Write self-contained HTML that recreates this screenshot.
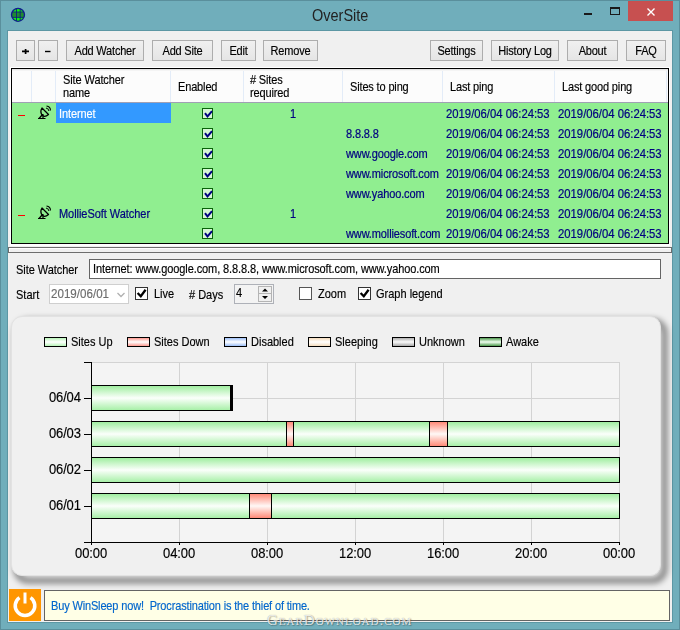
<!DOCTYPE html>
<html><head><meta charset="utf-8">
<style>
*{box-sizing:border-box;margin:0;padding:0}
html,body{width:680px;height:630px;overflow:hidden}
body{position:relative;background:#70aebb;font-family:"Liberation Sans",sans-serif;font-size:11px;color:#000}
.a{position:absolute}
.t{position:absolute;white-space:pre;line-height:13px;transform:scaleY(1.1);transform-origin:0 10.3px;-webkit-text-stroke-width:0.15px}
.nt{transform:none}
#frame{left:0;top:0;width:680px;height:630px;border:1px solid #5a8f9c}
#client{left:7px;top:30px;width:666px;height:593px;border:1px solid #5c97a4;background:#f0f0f0}
.btn{position:absolute;top:40px;height:21px;border:1px solid #adadad;background:linear-gradient(#f0f0f0,#e5e5e5);text-align:center;line-height:19px;font-size:11px;color:#000;letter-spacing:-0.2px;padding-top:1px}
.btn span{display:inline-block;transform:scaleY(1.1);transform-origin:50% 13.3px;-webkit-text-stroke-width:0.15px}
.hdr{position:absolute;top:69px;height:33px;background:#fcfcfc}
.sep{position:absolute;top:71px;width:1px;height:31px;background:#e3ecf8}
.row{position:absolute;left:12px;width:655px;height:20px}
.cb{position:absolute;left:202px;width:11px;height:11px;border:1px solid #0a640a;background:#d6f5d6}
.cb svg{position:absolute;left:1px;top:1px}
.nv{color:#000080;-webkit-text-stroke:0.2px #000080}
.sw{position:absolute;top:337px;width:23px;height:10px;border:1px solid #000}
</style></head><body>
<div class="a" id="frame"></div>
<!-- title bar -->
<svg class="a" style="left:10px;top:7px" width="16" height="16" viewBox="0 0 16 16">
<defs><clipPath id="gc"><circle cx="8" cy="7.8" r="6.6"/></clipPath></defs>
<g clip-path="url(#gc)">
<rect x="0" y="0" width="16" height="16" fill="#10f010"/>
<rect x="0" y="5" width="16" height="5.4" fill="#1f8a30"/>
<path d="M6.5 0V16M10.2 0V16M0 5H16M0 10.4H16" stroke="#102080" stroke-width="0.9"/>
</g>
<circle cx="8" cy="7.8" r="6.5" fill="none" stroke="#101a90" stroke-width="1.3"/>
</svg>
<div class="t" style="left:312px;top:7px;font-size:14.5px;line-height:18px;color:#222;transform:scaleY(1.08);transform-origin:0 14px;-webkit-text-stroke-width:0">OverSite</div>
<div class="a" style="left:584px;top:13px;width:8px;height:2px;background:#1a1a1a"></div>
<div class="a" style="left:610px;top:7px;width:10px;height:8px;border:1px solid #1a1a1a;border-top-width:2px"></div>
<div class="a" style="left:628px;top:1px;width:45px;height:20px;background:#c75050"></div>
<svg class="a" style="left:646px;top:7px" width="10" height="10" viewBox="0 0 10 10"><path d="M1.5 1.5L8.5 8.5M8.5 1.5L1.5 8.5" stroke="#fff" stroke-width="1.35"/></svg>

<div class="a" id="client"></div>

<!-- toolbar -->
<div class="btn" style="left:16px;width:19px"></div><svg class="a" style="left:20px;top:46px" width="12" height="10" viewBox="0 0 12 10"><path d="M2 5.3H9M5.6 3V8" stroke="#000" stroke-width="1.7"/></svg>
<div class="btn" style="left:38px;width:20px"></div><svg class="a" style="left:43px;top:46px" width="10" height="10" viewBox="0 0 10 10"><path d="M2 5.5H7.5" stroke="#000" stroke-width="1.4"/></svg>
<div class="btn" style="left:66px;width:78px"><span>Add Watcher</span></div>
<div class="btn" style="left:152px;width:61px"><span>Add Site</span></div>
<div class="btn" style="left:221px;width:35px"><span>Edit</span></div>
<div class="btn" style="left:263px;width:55px"><span>Remove</span></div>
<div class="btn" style="left:430px;width:53px"><span>Settings</span></div>
<div class="btn" style="left:491px;width:68px"><span>History Log</span></div>
<div class="btn" style="left:567px;width:51px"><span>About</span></div>
<div class="btn" style="left:626px;width:40px"><span>FAQ</span></div>

<!-- grid -->
<div class="a" style="left:10px;top:67px;width:660px;height:179px;background:#fff"></div>
<div class="a" style="left:11px;top:68px;width:658px;height:176px;border:1px solid #000;background:#90ee90"></div>
<div class="hdr" style="left:12px;width:656px;background:linear-gradient(#dcdcdc,#fcfcfc 2px)"></div>
<div class="a" style="left:12px;top:102px;width:656px;height:1px;background:#a0a0b4"></div><div class="sep" style="left:666px"></div>
<div class="sep" style="left:31px"></div>
<div class="sep" style="left:55px"></div>
<div class="sep" style="left:170px"></div>
<div class="sep" style="left:243px"></div>
<div class="sep" style="left:342px"></div>
<div class="sep" style="left:442px"></div>
<div class="sep" style="left:554px"></div>
<div class="t" style="left:63px;top:74px;letter-spacing:-0.1px">Site Watcher</div><div class="t" style="left:63px;top:87px;letter-spacing:-0.1px">name</div>
<div class="t" style="left:178px;top:81px;letter-spacing:-0.15px">Enabled</div>
<div class="t" style="left:250px;top:74px;letter-spacing:-0.15px"># Sites</div><div class="t" style="left:250px;top:87px;letter-spacing:-0.15px">required</div>
<div class="t" style="left:350px;top:81px;letter-spacing:-0.15px">Sites to ping</div>
<div class="t" style="left:450px;top:81px;letter-spacing:-0.15px">Last ping</div>
<div class="t" style="left:562px;top:81px;letter-spacing:-0.15px">Last good ping</div>

<!-- rows -->
<div class="a" style="left:56px;top:103px;width:115px;height:20px;background:#3399ff"></div>
<div class="a" style="left:18px;top:115px;width:7px;height:1px;background:#f00"></div>
<div class="a" style="left:18px;top:215px;width:7px;height:1px;background:#f00"></div>

<div class="t" style="left:59px;top:108px;color:#fff;letter-spacing:-0.1px">Internet</div>
<div class="t nv" style="left:59px;top:208px;letter-spacing:-0.05px">MollieSoft Watcher</div>
<div class="t nv" style="left:290px;top:108px">1</div>
<div class="t nv" style="left:290px;top:208px">1</div>

<div class="t nv" style="left:346px;top:128px;letter-spacing:-0.12px">8.8.8.8</div>
<div class="t nv" style="left:346px;top:148px;letter-spacing:-0.12px">www.google.com</div>
<div class="t nv" style="left:346px;top:168px;letter-spacing:-0.12px">www.microsoft.com</div>
<div class="t nv" style="left:346px;top:188px;letter-spacing:-0.12px">www.yahoo.com</div>
<div class="t nv" style="left:346px;top:228px;letter-spacing:-0.12px">www.molliesoft.com</div>

<div class="t nv" style="font-size:11.3px;left:446px;top:108px">2019/06/04 06:24:53</div>
<div class="t nv" style="font-size:11.3px;left:558px;top:108px">2019/06/04 06:24:53</div>
<div class="t nv" style="font-size:11.3px;left:446px;top:128px">2019/06/04 06:24:53</div>
<div class="t nv" style="font-size:11.3px;left:558px;top:128px">2019/06/04 06:24:53</div>
<div class="t nv" style="font-size:11.3px;left:446px;top:148px">2019/06/04 06:24:53</div>
<div class="t nv" style="font-size:11.3px;left:558px;top:148px">2019/06/04 06:24:53</div>
<div class="t nv" style="font-size:11.3px;left:446px;top:168px">2019/06/04 06:24:53</div>
<div class="t nv" style="font-size:11.3px;left:558px;top:168px">2019/06/04 06:24:53</div>
<div class="t nv" style="font-size:11.3px;left:446px;top:188px">2019/06/04 06:24:53</div>
<div class="t nv" style="font-size:11.3px;left:558px;top:188px">2019/06/04 06:24:53</div>
<div class="t nv" style="font-size:11.3px;left:446px;top:208px">2019/06/04 06:24:53</div>
<div class="t nv" style="font-size:11.3px;left:558px;top:208px">2019/06/04 06:24:53</div>
<div class="t nv" style="font-size:11.3px;left:446px;top:228px">2019/06/04 06:24:53</div>
<div class="t nv" style="font-size:11.3px;left:558px;top:228px">2019/06/04 06:24:53</div>
<div class="cb" style="top:108px"><svg width="9" height="9" viewBox="0 0 9 9"><path d="M1 3.2L3.5 6.5L8 1.2" stroke="#000080" stroke-width="2" fill="none"/></svg></div>
<div class="cb" style="top:128px"><svg width="9" height="9" viewBox="0 0 9 9"><path d="M1 3.2L3.5 6.5L8 1.2" stroke="#000080" stroke-width="2" fill="none"/></svg></div>
<div class="cb" style="top:148px"><svg width="9" height="9" viewBox="0 0 9 9"><path d="M1 3.2L3.5 6.5L8 1.2" stroke="#000080" stroke-width="2" fill="none"/></svg></div>
<div class="cb" style="top:168px"><svg width="9" height="9" viewBox="0 0 9 9"><path d="M1 3.2L3.5 6.5L8 1.2" stroke="#000080" stroke-width="2" fill="none"/></svg></div>
<div class="cb" style="top:188px"><svg width="9" height="9" viewBox="0 0 9 9"><path d="M1 3.2L3.5 6.5L8 1.2" stroke="#000080" stroke-width="2" fill="none"/></svg></div>
<div class="cb" style="top:208px"><svg width="9" height="9" viewBox="0 0 9 9"><path d="M1 3.2L3.5 6.5L8 1.2" stroke="#000080" stroke-width="2" fill="none"/></svg></div>
<div class="cb" style="top:228px"><svg width="9" height="9" viewBox="0 0 9 9"><path d="M1 3.2L3.5 6.5L8 1.2" stroke="#000080" stroke-width="2" fill="none"/></svg></div>
<svg class="a" style="left:34px;top:103px" width="20" height="20" viewBox="0 0 20 20">
<path d="M8 5L14.5 11.5Q11 14.5 8.5 12.5Q5.5 9 8 5Z" fill="none" stroke="#000" stroke-width="1.3" stroke-linejoin="round"/>
<path d="M9 11V15.5M8.5 11.5L5 15.5M4 15.5H11.5" stroke="#000" stroke-width="1.2" fill="none"/>
<path d="M12 5Q14.5 5.5 15 8M12.5 3Q16.5 3.5 16.5 7.5" stroke="#000" stroke-width="1.1" fill="none"/>
</svg>
<svg class="a" style="left:34px;top:203px" width="20" height="20" viewBox="0 0 20 20">
<path d="M8 5L14.5 11.5Q11 14.5 8.5 12.5Q5.5 9 8 5Z" fill="none" stroke="#000" stroke-width="1.3" stroke-linejoin="round"/>
<path d="M9 11V15.5M8.5 11.5L5 15.5M4 15.5H11.5" stroke="#000" stroke-width="1.2" fill="none"/>
<path d="M12 5Q14.5 5.5 15 8M12.5 3Q16.5 3.5 16.5 7.5" stroke="#000" stroke-width="1.1" fill="none"/>
</svg>
<!-- splitter -->
<div class="a" style="left:8px;top:247px;width:664px;height:6px;border:1px solid #6d6d6d;background:#f0f0f0;box-shadow:inset 1px 1px 0 #fff"></div>

<!-- site watcher row -->
<div class="t" style="left:16px;top:264px;letter-spacing:-0.05px">Site Watcher</div>
<div class="a" style="left:89px;top:259px;width:572px;height:20px;border:1px solid #646464;background:#fff"></div>
<div class="t" style="left:93px;top:263px;letter-spacing:-0.1px">Internet: www.google.com, 8.8.8.8, www.microsoft.com, www.yahoo.com</div>

<div class="t" style="left:16px;top:289px">Start</div>
<div class="a" style="left:49px;top:284px;width:80px;height:20px;border:1px solid #cfcfcf;background:#fff"></div>
<div class="t" style="left:51px;top:287px;color:#6d6d6d;font-size:11.6px">2019/06/01</div>
<svg class="a" style="left:116px;top:291px" width="10" height="8" viewBox="0 0 10 8"><path d="M1.5 2L5 5.5L8.5 2" stroke="#b0b0b0" stroke-width="1.3" fill="none"/></svg>

<div class="a" style="left:135px;top:287px;width:13px;height:13px;border:1px solid #333;background:#fff"></div>
<svg class="a" style="left:136px;top:288px" width="11" height="11" viewBox="0 0 11 11"><path d="M1.6 5L4.8 8.2L9.6 1.8" stroke="#000" stroke-width="2.3" fill="none"/></svg>
<div class="t" style="left:154px;top:288px">Live</div>
<div class="t" style="left:189px;top:289px"># Days</div>
<div class="a" style="left:234px;top:284px;width:40px;height:20px;border:1px solid #aeb1b8;background:#f3f3f3"></div>
<div class="t" style="left:236px;top:287px">4</div>
<div class="a" style="left:258px;top:286px;width:14px;height:16px;border:1px solid #b4b4b4;background:#f0f0f0"></div>
<div class="a" style="left:259px;top:293px;width:12px;height:1px;background:#b4b4b4"></div>
<svg class="a" style="left:259px;top:287px" width="12" height="14" viewBox="0 0 12 14"><path d="M3 4.5h6L6 1.5z M3 9h6L6 12z" fill="#000"/></svg>

<div class="a" style="left:299px;top:287px;width:13px;height:13px;border:1px solid #555;background:#fff"></div>
<div class="t" style="left:318px;top:288px">Zoom</div>
<div class="a" style="left:358px;top:287px;width:13px;height:13px;border:1px solid #333;background:#fff"></div>
<svg class="a" style="left:359px;top:288px" width="11" height="11" viewBox="0 0 11 11"><path d="M1.6 5L4.8 8.2L9.6 1.8" stroke="#000" stroke-width="2.3" fill="none"/></svg>
<div class="t" style="left:376px;top:288px">Graph legend</div>

<!-- chart panel -->
<div class="a" style="left:14px;top:319px;width:653px;height:264px;border-radius:14px;border:5px solid rgba(0,0,0,0.55);filter:blur(3px)"></div>
<div class="a" style="left:11px;top:316px;width:650px;height:260px;border-radius:11px;border:1px solid #e2e2e2;background:#f0f0f0"></div>

<div class="a" style="left:91px;top:362px;width:529px;height:181px;background:#f4f4f4"></div>
<div class="a" style="left:179px;top:362px;width:1px;height:180px;background:#d3d3d3"></div>
<div class="a" style="left:267px;top:362px;width:1px;height:180px;background:#d3d3d3"></div>
<div class="a" style="left:355px;top:362px;width:1px;height:180px;background:#d3d3d3"></div>
<div class="a" style="left:443px;top:362px;width:1px;height:180px;background:#d3d3d3"></div>
<div class="a" style="left:531px;top:362px;width:1px;height:180px;background:#d3d3d3"></div>
<div class="a" style="left:619px;top:362px;width:1px;height:180px;background:#d3d3d3"></div>
<div class="a" style="left:91px;top:362px;width:529px;height:1px;background:#d3d3d3"></div>
<div class="a" style="left:91px;top:398px;width:529px;height:1px;background:#d3d3d3"></div>
<div class="a" style="left:91px;top:434px;width:529px;height:1px;background:#d3d3d3"></div>
<div class="a" style="left:91px;top:470px;width:529px;height:1px;background:#d3d3d3"></div>
<div class="a" style="left:91px;top:506px;width:529px;height:1px;background:#d3d3d3"></div>
<div class="a" style="left:91px;top:362px;width:1px;height:183px;background:#000"></div>
<div class="a" style="left:84px;top:542px;width:536px;height:1px;background:#000"></div>
<div class="a" style="left:84px;top:362px;width:7px;height:1px;background:#000"></div>
<div class="a" style="left:84px;top:398px;width:7px;height:1px;background:#000"></div>
<div class="a" style="left:84px;top:434px;width:7px;height:1px;background:#000"></div>
<div class="a" style="left:84px;top:470px;width:7px;height:1px;background:#000"></div>
<div class="a" style="left:84px;top:506px;width:7px;height:1px;background:#000"></div>
<div class="a" style="left:179px;top:542px;width:1px;height:3px;background:#000"></div>
<div class="a" style="left:267px;top:542px;width:1px;height:3px;background:#000"></div>
<div class="a" style="left:355px;top:542px;width:1px;height:3px;background:#000"></div>
<div class="a" style="left:443px;top:542px;width:1px;height:3px;background:#000"></div>
<div class="a" style="left:531px;top:542px;width:1px;height:3px;background:#000"></div>
<div class="a" style="left:619px;top:542px;width:1px;height:3px;background:#000"></div>
<div class="a" style="left:91px;top:385px;width:142px;height:26px;border:1px solid #000;background:linear-gradient(#a0eea0,#fbfffb 50%,#a8f0a8)"></div>
<div class="a" style="left:230px;top:385px;width:2px;height:26px;background:#000"></div>
<div class="a" style="left:91px;top:421px;width:529px;height:26px;border:1px solid #000;background:linear-gradient(#a0eea0,#fbfffb 50%,#a8f0a8)"></div>
<div class="a" style="left:286px;top:421px;width:8px;height:26px;border:1px solid #000;background:linear-gradient(#ff8a78,#fff8f6 50%,#ff8a78)"></div>
<div class="a" style="left:429px;top:421px;width:19px;height:26px;border:1px solid #000;background:linear-gradient(#ff8a78,#fff8f6 50%,#ff8a78)"></div>
<div class="a" style="left:91px;top:457px;width:529px;height:26px;border:1px solid #000;background:linear-gradient(#a0eea0,#fbfffb 50%,#a8f0a8)"></div>
<div class="a" style="left:91px;top:493px;width:529px;height:26px;border:1px solid #000;background:linear-gradient(#a0eea0,#fbfffb 50%,#a8f0a8)"></div>
<div class="a" style="left:249px;top:493px;width:23px;height:26px;border:1px solid #000;background:linear-gradient(#ff8a78,#fff8f6 50%,#ff8a78)"></div>
<div class="t" style="left:49px;top:390px;font-size:13px;line-height:16px;transform-origin:0 12.5px;letter-spacing:-0.15px">06/04</div>
<div class="t" style="left:49px;top:426px;font-size:13px;line-height:16px;transform-origin:0 12.5px;letter-spacing:-0.15px">06/03</div>
<div class="t" style="left:49px;top:462px;font-size:13px;line-height:16px;transform-origin:0 12.5px;letter-spacing:-0.15px">06/02</div>
<div class="t" style="left:49px;top:498px;font-size:13px;line-height:16px;transform-origin:0 12.5px;letter-spacing:-0.15px">06/01</div>
<div class="t" style="left:75px;top:547px;width:32px;text-align:center;font-size:13px;line-height:14px;transform-origin:50% 11.5px;letter-spacing:-0.1px">00:00</div>
<div class="t" style="left:163px;top:547px;width:32px;text-align:center;font-size:13px;line-height:14px;transform-origin:50% 11.5px;letter-spacing:-0.1px">04:00</div>
<div class="t" style="left:251px;top:547px;width:32px;text-align:center;font-size:13px;line-height:14px;transform-origin:50% 11.5px;letter-spacing:-0.1px">08:00</div>
<div class="t" style="left:339px;top:547px;width:32px;text-align:center;font-size:13px;line-height:14px;transform-origin:50% 11.5px;letter-spacing:-0.1px">12:00</div>
<div class="t" style="left:427px;top:547px;width:32px;text-align:center;font-size:13px;line-height:14px;transform-origin:50% 11.5px;letter-spacing:-0.1px">16:00</div>
<div class="t" style="left:515px;top:547px;width:32px;text-align:center;font-size:13px;line-height:14px;transform-origin:50% 11.5px;letter-spacing:-0.1px">20:00</div>
<div class="t" style="left:603px;top:547px;width:32px;text-align:center;font-size:13px;line-height:14px;transform-origin:50% 11.5px;letter-spacing:-0.1px">00:00</div>
<div class="sw" style="left:44px;background:linear-gradient(#b8f4b8,#fff 50%,#b8f4b8)"></div>
<div class="t" style="left:71px;top:336px">Sites Up</div>
<div class="sw" style="left:127px;background:linear-gradient(#ff9a90,#fff 50%,#ff9a90)"></div>
<div class="t" style="left:154px;top:336px">Sites Down</div>
<div class="sw" style="left:224px;background:linear-gradient(#9cbff8,#fff 50%,#9cbff8)"></div>
<div class="t" style="left:251px;top:336px">Disabled</div>
<div class="sw" style="left:308px;background:linear-gradient(#f5dcbc,#fff 50%,#f5dcbc)"></div>
<div class="t" style="left:335px;top:336px">Sleeping</div>
<div class="sw" style="left:392px;background:linear-gradient(#b0b0b0,#fafafa 50%,#a8a8a8)"></div>
<div class="t" style="left:419px;top:336px">Unknown</div>
<div class="sw" style="left:479px;background:linear-gradient(#4e9a4e,#f0fff0 50%,#4e9a4e)"></div>
<div class="t" style="left:506px;top:336px">Awake</div>
<!-- footer -->
<div class="a" style="left:9px;top:589px;width:32px;height:32px;background:#ff9600"></div>
<svg class="a" style="left:9px;top:589px" width="32" height="32" viewBox="0 0 32 32">
<path d="M10.5 8.6A9.8 9.8 0 1 0 21.5 8.6" stroke="#fff" stroke-width="3.5" fill="none"/>
<path d="M16 3.5V14.5" stroke="#fff" stroke-width="3"/></svg>
<div class="a" style="left:44px;top:590px;width:626px;height:31px;border:1px solid #646464;background:#ffffe6"></div>
<div class="t" style="left:51px;top:600px;color:#0066cc;letter-spacing:-0.15px">Buy WinSleep now!  Procrastination is the thief of time.</div>
<div class="t nt" style="left:267px;top:613px;font-family:'Liberation Serif',serif;font-size:15px;line-height:15px;font-variant:small-caps;letter-spacing:1px;color:rgba(255,255,255,0.8);text-shadow:0 0 1px rgba(0,0,0,0.45),1px 1px 1px rgba(0,0,0,0.25)">GearDownload.com</div>
</body></html>
